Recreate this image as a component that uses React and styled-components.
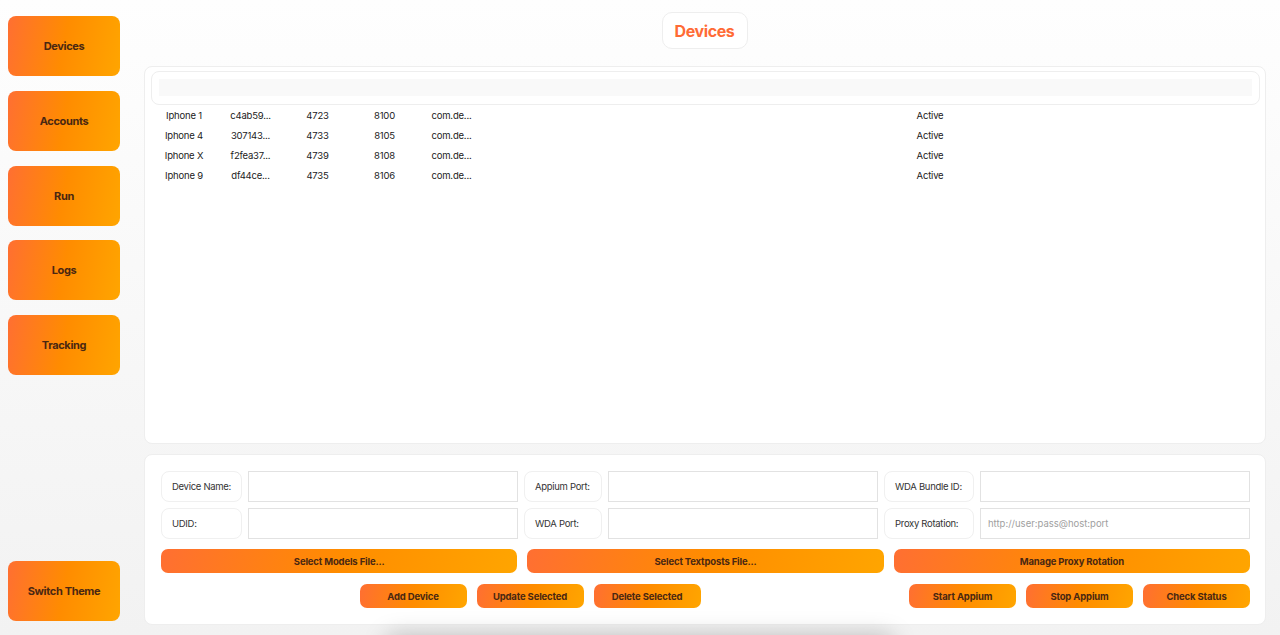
import styled, { createGlobalStyle } from 'styled-components';

const GlobalStyle = createGlobalStyle`
  html, body {
    margin: 0;
    height: 100%;
  }
  body {
    font-family: Inter, "Liberation Sans", sans-serif;
    color: #2b2b2b;
  }
`;

const orange = 'linear-gradient(100deg, #ff6f32 0%, #ff8c00 50%, #ffa500 100%)';

const Page = styled.div`
  position: relative;
  display: flex;
  height: 635px;
  overflow: hidden;
  background: linear-gradient(180deg, #fefefe 0%, #f2f2f2 100%);
`;

const Sidebar = styled.nav`
  width: 112px;
  margin-left: 8px;
  padding: 16px 0 14px;
  display: flex;
  flex-direction: column;
  gap: 14.8px;
  flex-shrink: 0;
`;

const SideButton = styled.button`
  height: 60px;
  flex-shrink: 0;
  border: 0;
  border-radius: 8px;
  background: ${orange};
  color: #4a2712;
  font: 700 11px Inter, "Liberation Sans", sans-serif;
  letter-spacing: -0.35px;
  margin-top: ${(p) => (p.$bottom ? 'auto' : '0')};
`;

const Main = styled.main`
  width: 1122px;
  margin-left: 24px;
  padding-top: 12px;
  display: flex;
  flex-direction: column;
  flex-shrink: 0;
`;

const Title = styled.h1`
  align-self: center;
  width: 86px;
  height: 37px;
  margin: 0 0 17px;
  padding-right: 1px;
  box-sizing: border-box;
  display: flex;
  align-items: center;
  justify-content: center;
  background: #fff;
  border: 1px solid #eeeeee;
  border-radius: 10px;
  color: #ff6b35;
  font-size: 16px;
  font-weight: 700;
  letter-spacing: -0.4px;
`;

const TablePanel = styled.section`
  height: 378px;
  box-sizing: border-box;
  padding: 4px 5px 4px 6px;
  background: #fff;
  border: 1px solid #eeeeee;
  border-radius: 8px;
`;

const TableHeader = styled.div`
  height: 34px;
  box-sizing: border-box;
  padding: 7px 7px;
  border: 1px solid #eeeeee;
  border-radius: 8px;
`;

const HeaderFill = styled.div`
  height: 17px;
  background: #f9f9f9;
`;

const Row = styled.div`
  display: grid;
  grid-template-columns: 66px 67px 67px 67px 67px 115px 1fr;
  height: 20px;
  align-items: center;
`;

const Cell = styled.span`
  text-align: center;
  font-size: 9.5px;
  letter-spacing: -0.2px;
  color: #222;
  white-space: nowrap;
`;

const FormPanel = styled.section`
  height: 171px;
  margin-top: 10px;
  box-sizing: border-box;
  padding: 16px 15px 0 16px;
  background: #fff;
  border: 1px solid #eeeeee;
  border-radius: 8px;
`;

const FieldGrid = styled.div`
  display: grid;
  grid-template-columns: 81px 270px 78px 270px 90px 270px;
  grid-auto-rows: 31px;
  gap: 6px;
`;

const FieldLabel = styled.label`
  display: flex;
  align-items: center;
  padding-left: 10px;
  background: #fff;
  border: 1px solid #f0f0f0;
  border-radius: 8px;
  font-size: 9.5px;
  letter-spacing: -0.3px;
  color: #333;
  white-space: nowrap;
`;

const Input = styled.input`
  box-sizing: border-box;
  min-width: 0;
  padding: 0 7px;
  border: 1px solid #e2e2e2;
  background: #fff;
  outline: 0;
  font: 9.5px Inter, "Liberation Sans", sans-serif;
  &::placeholder {
    color: #a0a0a0;
  }
`;

const WideRow = styled.div`
  display: grid;
  grid-template-columns: repeat(3, 1fr);
  gap: 10px;
  margin-top: 10px;
`;

const ActionRow = styled.div`
  display: flex;
  gap: 10px;
  margin-top: 11px;
`;

const Spacer = styled.div`
  flex: 1;
`;

const ActionButton = styled.button`
  height: 24px;
  width: ${(p) => (p.$wide ? 'auto' : '107px')};
  border: 0;
  border-radius: 7px;
  background: ${orange};
  color: #4a2712;
  font: 700 9.5px Inter, "Liberation Sans", sans-serif;
  letter-spacing: -0.15px;
  white-space: nowrap;
`;

const DockShadow = styled.div`
  position: absolute;
  left: 385px;
  bottom: -24px;
  width: 510px;
  height: 24px;
  background: rgba(0, 0, 0, 0.22);
  filter: blur(11px);
  border-radius: 12px;
`;

const devices = [
  ['Iphone 1', 'c4ab59...', '4723', '8100', 'com.de...', 'Active'],
  ['Iphone 4', '307143...', '4733', '8105', 'com.de...', 'Active'],
  ['Iphone X', 'f2fea37...', '4739', '8108', 'com.de...', 'Active'],
  ['Iphone 9', 'df44ce...', '4735', '8106', 'com.de...', 'Active'],
];

function DeviceRow({ device }) {
  const [name, udid, appium, wda, bundle, status] = device;
  return (
    <Row>
      <Cell>{name}</Cell>
      <Cell>{udid}</Cell>
      <Cell>{appium}</Cell>
      <Cell>{wda}</Cell>
      <Cell>{bundle}</Cell>
      <span />
      <Cell>{status}</Cell>
    </Row>
  );
}

export default function App() {
  return (
    <Page>
      <GlobalStyle />
      <Sidebar>
        <SideButton>Devices</SideButton>
        <SideButton>Accounts</SideButton>
        <SideButton>Run</SideButton>
        <SideButton>Logs</SideButton>
        <SideButton>Tracking</SideButton>
        <SideButton $bottom>Switch Theme</SideButton>
      </Sidebar>
      <Main>
        <Title>Devices</Title>
        <TablePanel>
          <TableHeader>
            <HeaderFill />
          </TableHeader>
          {devices.map((device) => (
            <DeviceRow key={device[0]} device={device} />
          ))}
        </TablePanel>
        <FormPanel>
          <FieldGrid>
            <FieldLabel>Device Name:</FieldLabel>
            <Input />
            <FieldLabel>Appium Port:</FieldLabel>
            <Input />
            <FieldLabel>WDA Bundle ID:</FieldLabel>
            <Input />
            <FieldLabel>UDID:</FieldLabel>
            <Input />
            <FieldLabel>WDA Port:</FieldLabel>
            <Input />
            <FieldLabel>Proxy Rotation:</FieldLabel>
            <Input placeholder="http://user:pass@host:port" />
          </FieldGrid>
          <WideRow>
            <ActionButton $wide>Select Models File...</ActionButton>
            <ActionButton $wide>Select Textposts File...</ActionButton>
            <ActionButton $wide>Manage Proxy Rotation</ActionButton>
          </WideRow>
          <ActionRow>
            <Spacer />
            <ActionButton>Add Device</ActionButton>
            <ActionButton>Update Selected</ActionButton>
            <ActionButton>Delete Selected</ActionButton>
            <Spacer />
            <ActionButton>Start Appium</ActionButton>
            <ActionButton>Stop Appium</ActionButton>
            <ActionButton>Check Status</ActionButton>
          </ActionRow>
        </FormPanel>
      </Main>
      <DockShadow />
    </Page>
  );
}
